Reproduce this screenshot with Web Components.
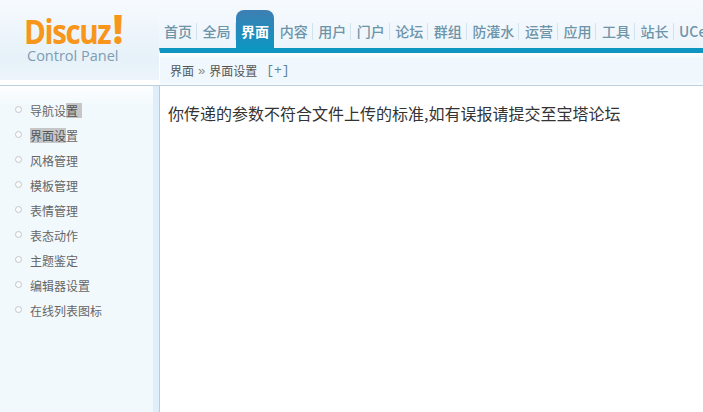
<!DOCTYPE html>
<html lang="zh">
<head>
<meta charset="utf-8">
<title>Discuz! Control Panel</title>
<style>
  html, body { margin: 0; height: 100%; overflow: hidden; }
  body { font: 12px "Noto Sans CJK SC", sans-serif; color: #666; background: #fff; }
</style>
</head>
<body>
<admin-shell>
  <admin-logo slot="logo"></admin-logo>
  <top-nav slot="nav">
    <nav-tab>首页</nav-tab><nav-tab>全局</nav-tab><nav-tab active>界面</nav-tab><nav-tab>内容</nav-tab>
    <nav-tab>用户</nav-tab><nav-tab>门户</nav-tab><nav-tab>论坛</nav-tab><nav-tab>群组</nav-tab>
    <nav-tab>防灌水</nav-tab><nav-tab>运营</nav-tab><nav-tab>应用</nav-tab><nav-tab>工具</nav-tab>
    <nav-tab>站长</nav-tab><nav-tab>UCenter</nav-tab>
  </top-nav>
  <bread-crumb slot="crumb"></bread-crumb>
  <side-menu slot="menu">
    <menu-item><span>导航设</span><mark-sel tail>置</mark-sel></menu-item>
    <menu-item><mark-sel>界面设</mark-sel><span>置</span></menu-item>
    <menu-item>风格管理</menu-item>
    <menu-item>模板管理</menu-item>
    <menu-item>表情管理</menu-item>
    <menu-item>表态动作</menu-item>
    <menu-item>主题鉴定</menu-item>
    <menu-item>编辑器设置</menu-item>
    <menu-item>在线列表图标</menu-item>
  </side-menu>
  <div slot="main">你传递的参数不符合文件上传的标准,如有误报请提交至宝塔论坛</div>
</admin-shell>

<script>
class AdminShell extends HTMLElement {
  constructor() {
    super();
    this.attachShadow({ mode: "open" });
    this.shadowRoot.innerHTML = `
      <style>
        :host { display: grid; grid-template-columns: 159px 1fr; grid-template-rows: 85px 1fr; height: 412px; width: 703px; overflow: hidden; }
        .logo { background: linear-gradient(#f6fafe, #e6f1f9 70%, #edf5fb 94%, #fff 94%); }
        .top { display: flex; flex-direction: column; background: linear-gradient(#f6fafe, #e6f1f9); min-width: 0; }
        .navwrap { flex: none; height: 48px; display: flex; align-items: flex-end; overflow: hidden; }
        .crumb { flex: 1; min-height: 0; border-top: 5px solid #0f95c2; border-left: 1px solid #fff; background: linear-gradient(#fff, #f0f8fd 18%, #f0f8fd 90%, #f8fbfe); }
        .side { grid-row: 2; border-top: 1px solid #bcd0de; background: linear-gradient(#fdfeff, #f2f9fd 20px); box-shadow: inset -6px 0 0 #deeefa; }
        .main { border-top: 1px solid #bcd0de; border-left: 1px solid #b5cfdf; background: #fff; padding: 16px 8px; font-size: 16px; line-height: 22px; color: #333; }
      </style>
      <div class="logo"><slot name="logo"></slot></div>
      <div class="top">
        <div class="navwrap"><slot name="nav"></slot></div>
        <div class="crumb"><slot name="crumb"></slot></div>
      </div>
      <div class="side"><slot name="menu"></slot></div>
      <div class="main"><slot name="main"></slot></div>`;
  }
}

class AdminLogo extends HTMLElement {
  constructor() {
    super();
    this.attachShadow({ mode: "open" });
    this.shadowRoot.innerHTML = `
      <style>
        :host { display: block; padding: 13px 0 0 24px; }
        .mark { display: inline-block; height: 31px; font: bold 34px/31px "Open Sans", sans-serif; color: #f8961c; letter-spacing: -1.6px; white-space: nowrap; transform: scaleX(.87); transform-origin: left top; }
        .mark b { font-size: 40px; line-height: 31px; letter-spacing: 0; margin-left: 3px; }
        .sub { font: 14.5px/16px "Open Sans", sans-serif; color: #7e9db2; margin: 1px 0 0 3px; white-space: nowrap; }
      </style>
      <div class="mark">Discuz<b>!</b></div>
      <div class="sub">Control Panel</div>`;
  }
}

class TopNav extends HTMLElement {
  constructor() {
    super();
    this.attachShadow({ mode: "open" });
    this.shadowRoot.innerHTML = `
      <style>
        :host { display: flex; align-items: flex-end; white-space: nowrap; height: 38px; }
      </style>
      <slot></slot>`;
  }
}

class NavTab extends HTMLElement {
  constructor() {
    super();
    this.attachShadow({ mode: "open" });
    this.shadowRoot.innerHTML = `
      <style>
        :host { display: block; flex: none; height: 38px; box-sizing: border-box; padding: 11px 5px 0; margin-right: 0.55px; font: 500 14px/20px "Noto Sans CJK SC", sans-serif; color: #6d94a8; position: relative; }
        :host::after { content: ""; position: absolute; right: 0; top: 13px; height: 17px; width: 1px; background: #d3e3ee; }
        :host([active]) { color: #fff; font-weight: 700; border-radius: 8px 8px 0 0; background: linear-gradient(#3d7fb3, #0f95c2); }
        :host([active])::after { display: none; }
      </style>
      <slot></slot>`;
  }
}

class BreadCrumb extends HTMLElement {
  constructor() {
    super();
    this.attachShadow({ mode: "open" });
    this.shadowRoot.innerHTML = `
      <style>
        :host { display: flex; align-items: center; gap: 4px; height: 32px; box-sizing: border-box; padding: 3px 0 0 10px; color: #555; font-size: 12px; white-space: nowrap; }
        .sep { font: 13px "Liberation Sans", sans-serif; color: #888; }
        .more { color: #5f8499; margin-left: 5px; font: 13px "Liberation Mono", monospace; }
      </style>
      <span>界面</span><span class="sep">»</span><span>界面设置</span><span class="more">[+]</span>`;
  }
}

class SideMenu extends HTMLElement {
  constructor() {
    super();
    this.attachShadow({ mode: "open" });
    this.shadowRoot.innerHTML = `
      <style>:host { display: flex; flex-direction: column; padding-top: 12px; }</style>
      <slot></slot>`;
  }
}

class MenuItem extends HTMLElement {
  constructor() {
    super();
    this.attachShadow({ mode: "open" });
    this.shadowRoot.innerHTML = `
      <style>
        :host { display: flex; align-items: center; height: 25px; padding-left: 15px; color: #666; font-size: 12px; white-space: nowrap; }
        .dot { width: 7px; height: 7px; box-sizing: border-box; border: 1px solid #c2c6c8; border-radius: 50%; margin: -3px 8px 0 0; background: #fafcfd; }
      </style>
      <span class="dot"></span><slot></slot>`;
  }
}

class MarkSel extends HTMLElement {
  constructor() {
    super();
    this.attachShadow({ mode: "open" });
    this.shadowRoot.innerHTML = `
      <style>
        :host { display: inline-block; background: #c6c6c6; color: #555; line-height: 15px; }
        :host([tail]) { padding-right: 4px; }
      </style>
      <slot></slot>`;
  }
}

customElements.define("admin-shell", AdminShell);
customElements.define("admin-logo", AdminLogo);
customElements.define("top-nav", TopNav);
customElements.define("nav-tab", NavTab);
customElements.define("bread-crumb", BreadCrumb);
customElements.define("side-menu", SideMenu);
customElements.define("menu-item", MenuItem);
customElements.define("mark-sel", MarkSel);
</script>
</body>
</html>
